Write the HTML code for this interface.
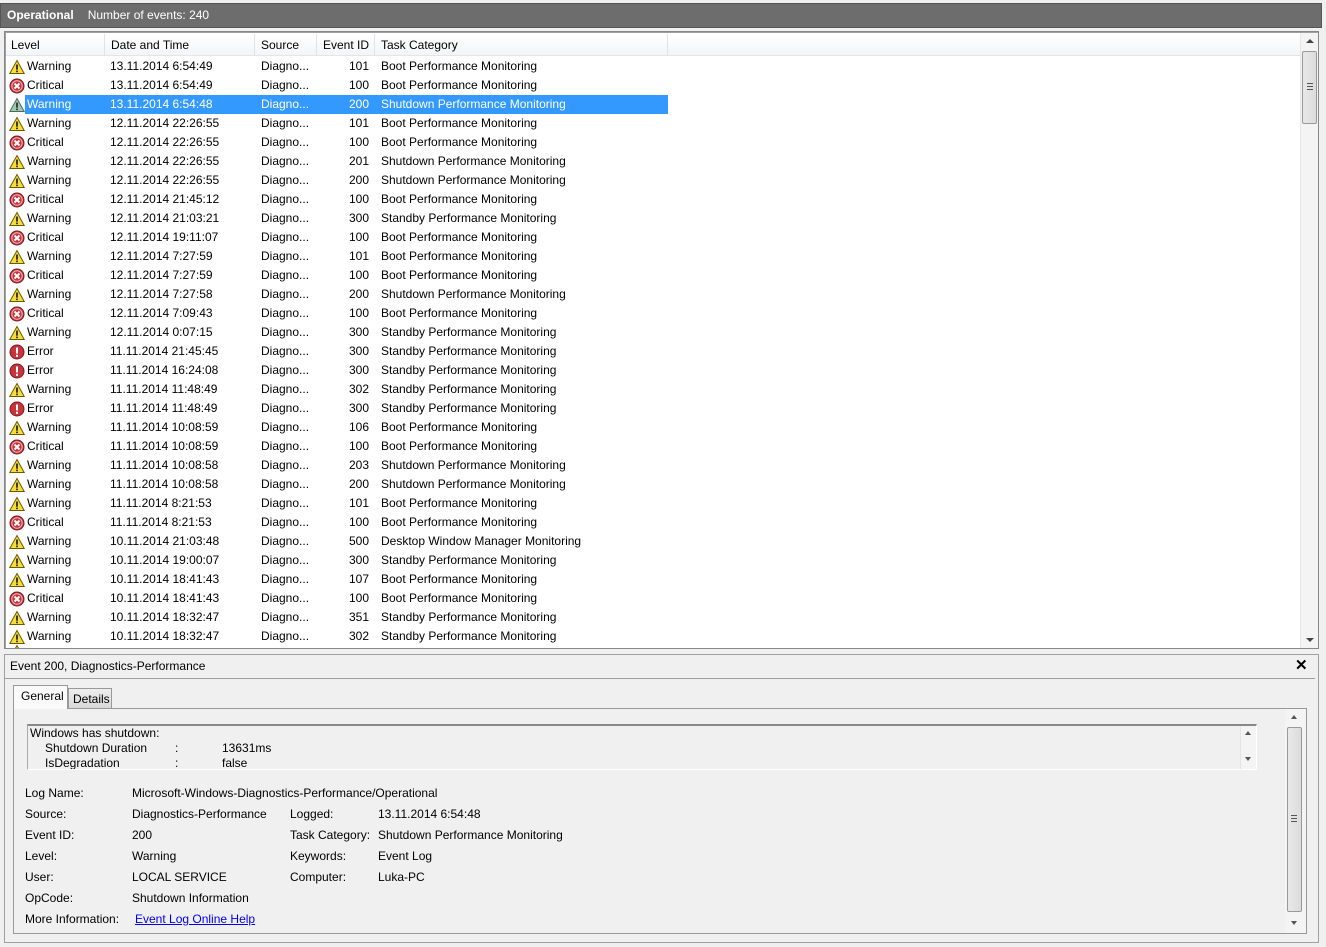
<!DOCTYPE html>
<html><head><meta charset="utf-8"><style>
*{margin:0;padding:0;box-sizing:border-box}
body{width:1326px;height:947px;background:#f0f0f0;font-family:"Liberation Sans",sans-serif;font-size:12px;color:#000;position:relative;overflow:hidden}
.abs{position:absolute}
#title{left:0;top:3px;width:1322px;height:25px;background:#6d6d6d;border:1px solid #555;color:#fff;line-height:23px}
#list{left:4px;top:31px;width:1315px;height:618px;background:#fff;border:1px solid #888;box-shadow:inset 1px 1px 0 #a0a0a0}
.hd{position:absolute;top:2px;height:22px;line-height:22px;background:linear-gradient(#fff,#f4f5f7);border-right:1px solid #e2e3e5;border-bottom:1px solid #e5e5e5}
.r{position:absolute;left:0;height:19px;line-height:19px;width:663px;white-space:nowrap}
.r span{position:absolute}
.r .i{position:absolute;left:4px;top:2px;width:16px;height:16px}
.l{left:22px}.d{left:105px}.s{left:256px}.e{left:312px;width:52px;text-align:right}.t{left:376px}
.sel{background:#3399ff;color:#fff}
.sb{position:absolute;background:#f4f4f4;border-left:1px solid #e6e6e6}
.thumb{position:absolute;background:linear-gradient(90deg,#e8e8e8,#dcdcdc);border:1px solid #999;border-radius:2px}
a{color:#0000ee;text-decoration:underline}
</style></head><body>
<svg width="0" height="0" style="position:absolute">
<defs>
<g id="w"><path d="M8 1.5 L15.2 14.5 H0.8 Z" fill="#f7dd3a" stroke="#6b5a00" stroke-width="1"/><rect x="7.2" y="5.5" width="1.6" height="5.2" fill="#111"/><rect x="7.2" y="11.6" width="1.6" height="1.6" fill="#111"/></g>
<g id="ws"><path d="M8 1.5 L15.2 14.5 H0.8 Z" fill="#9ec9b0" stroke="#4f6b5b" stroke-width="1"/><rect x="7.2" y="5.5" width="1.6" height="5.2" fill="#222"/><rect x="7.2" y="11.6" width="1.6" height="1.6" fill="#222"/></g>
<g id="c"><circle cx="8" cy="8" r="7" fill="#c9333c" stroke="#7a1a20"/><circle cx="8" cy="8" r="5.2" fill="none" stroke="#f2b9bc" stroke-width="1"/><path d="M5.5 5.5 L10.5 10.5 M10.5 5.5 L5.5 10.5" stroke="#fff" stroke-width="2"/></g>
<g id="e"><circle cx="8" cy="8" r="7" fill="#c9333c" stroke="#7a1a20"/><rect x="7" y="3.5" width="2" height="6" fill="#fff"/><rect x="7" y="10.8" width="2" height="2" fill="#fff"/></g>
</defs></svg>

<div id="title" class="abs"><b style="margin-left:6px">Operational</b><span style="margin-left:14px">Number of events: 240</span></div>

<div id="list" class="abs">
<div class="hd" style="left:1px;width:99px"><span style="margin-left:5px">Level</span></div>
<div class="hd" style="left:100px;width:150px"><span style="margin-left:6px">Date and Time</span></div>
<div class="hd" style="left:250px;width:62px"><span style="margin-left:6px">Source</span></div>
<div class="hd" style="left:312px;width:58px;text-align:right;padding-right:5px">Event ID</div>
<div class="hd" style="left:370px;width:293px"><span style="margin-left:6px">Task Category</span></div>
<div class="hd" style="left:663px;width:633px;border-right:0"></div>

<div style="position:absolute;left:0;top:-6px">
<div class="r" style="top:31px"><svg class="i"><use href="#w"/></svg><span class="l">Warning</span><span class="d">13.11.2014 6:54:49</span><span class="s">Diagno...</span><span class="e">101</span><span class="t">Boot Performance Monitoring</span></div>
<div class="r" style="top:50px"><svg class="i"><use href="#c"/></svg><span class="l">Critical</span><span class="d">13.11.2014 6:54:49</span><span class="s">Diagno...</span><span class="e">100</span><span class="t">Boot Performance Monitoring</span></div>
<div class="r" style="top:69px"><svg class="i"><use href="#ws"/></svg><div class="sel" style="position:absolute;left:20px;top:0;width:643px;height:19px"></div><span class="l" style="color:#fff">Warning</span><span class="d" style="color:#fff">13.11.2014 6:54:48</span><span class="s" style="color:#fff">Diagno...</span><span class="e" style="color:#fff">200</span><span class="t" style="color:#fff">Shutdown Performance Monitoring</span></div>
<div class="r" style="top:88px"><svg class="i"><use href="#w"/></svg><span class="l">Warning</span><span class="d">12.11.2014 22:26:55</span><span class="s">Diagno...</span><span class="e">101</span><span class="t">Boot Performance Monitoring</span></div>
<div class="r" style="top:107px"><svg class="i"><use href="#c"/></svg><span class="l">Critical</span><span class="d">12.11.2014 22:26:55</span><span class="s">Diagno...</span><span class="e">100</span><span class="t">Boot Performance Monitoring</span></div>
<div class="r" style="top:126px"><svg class="i"><use href="#w"/></svg><span class="l">Warning</span><span class="d">12.11.2014 22:26:55</span><span class="s">Diagno...</span><span class="e">201</span><span class="t">Shutdown Performance Monitoring</span></div>
<div class="r" style="top:145px"><svg class="i"><use href="#w"/></svg><span class="l">Warning</span><span class="d">12.11.2014 22:26:55</span><span class="s">Diagno...</span><span class="e">200</span><span class="t">Shutdown Performance Monitoring</span></div>
<div class="r" style="top:164px"><svg class="i"><use href="#c"/></svg><span class="l">Critical</span><span class="d">12.11.2014 21:45:12</span><span class="s">Diagno...</span><span class="e">100</span><span class="t">Boot Performance Monitoring</span></div>
<div class="r" style="top:183px"><svg class="i"><use href="#w"/></svg><span class="l">Warning</span><span class="d">12.11.2014 21:03:21</span><span class="s">Diagno...</span><span class="e">300</span><span class="t">Standby Performance Monitoring</span></div>
<div class="r" style="top:202px"><svg class="i"><use href="#c"/></svg><span class="l">Critical</span><span class="d">12.11.2014 19:11:07</span><span class="s">Diagno...</span><span class="e">100</span><span class="t">Boot Performance Monitoring</span></div>
<div class="r" style="top:221px"><svg class="i"><use href="#w"/></svg><span class="l">Warning</span><span class="d">12.11.2014 7:27:59</span><span class="s">Diagno...</span><span class="e">101</span><span class="t">Boot Performance Monitoring</span></div>
<div class="r" style="top:240px"><svg class="i"><use href="#c"/></svg><span class="l">Critical</span><span class="d">12.11.2014 7:27:59</span><span class="s">Diagno...</span><span class="e">100</span><span class="t">Boot Performance Monitoring</span></div>
<div class="r" style="top:259px"><svg class="i"><use href="#w"/></svg><span class="l">Warning</span><span class="d">12.11.2014 7:27:58</span><span class="s">Diagno...</span><span class="e">200</span><span class="t">Shutdown Performance Monitoring</span></div>
<div class="r" style="top:278px"><svg class="i"><use href="#c"/></svg><span class="l">Critical</span><span class="d">12.11.2014 7:09:43</span><span class="s">Diagno...</span><span class="e">100</span><span class="t">Boot Performance Monitoring</span></div>
<div class="r" style="top:297px"><svg class="i"><use href="#w"/></svg><span class="l">Warning</span><span class="d">12.11.2014 0:07:15</span><span class="s">Diagno...</span><span class="e">300</span><span class="t">Standby Performance Monitoring</span></div>
<div class="r" style="top:316px"><svg class="i"><use href="#e"/></svg><span class="l">Error</span><span class="d">11.11.2014 21:45:45</span><span class="s">Diagno...</span><span class="e">300</span><span class="t">Standby Performance Monitoring</span></div>
<div class="r" style="top:335px"><svg class="i"><use href="#e"/></svg><span class="l">Error</span><span class="d">11.11.2014 16:24:08</span><span class="s">Diagno...</span><span class="e">300</span><span class="t">Standby Performance Monitoring</span></div>
<div class="r" style="top:354px"><svg class="i"><use href="#w"/></svg><span class="l">Warning</span><span class="d">11.11.2014 11:48:49</span><span class="s">Diagno...</span><span class="e">302</span><span class="t">Standby Performance Monitoring</span></div>
<div class="r" style="top:373px"><svg class="i"><use href="#e"/></svg><span class="l">Error</span><span class="d">11.11.2014 11:48:49</span><span class="s">Diagno...</span><span class="e">300</span><span class="t">Standby Performance Monitoring</span></div>
<div class="r" style="top:392px"><svg class="i"><use href="#w"/></svg><span class="l">Warning</span><span class="d">11.11.2014 10:08:59</span><span class="s">Diagno...</span><span class="e">106</span><span class="t">Boot Performance Monitoring</span></div>
<div class="r" style="top:411px"><svg class="i"><use href="#c"/></svg><span class="l">Critical</span><span class="d">11.11.2014 10:08:59</span><span class="s">Diagno...</span><span class="e">100</span><span class="t">Boot Performance Monitoring</span></div>
<div class="r" style="top:430px"><svg class="i"><use href="#w"/></svg><span class="l">Warning</span><span class="d">11.11.2014 10:08:58</span><span class="s">Diagno...</span><span class="e">203</span><span class="t">Shutdown Performance Monitoring</span></div>
<div class="r" style="top:449px"><svg class="i"><use href="#w"/></svg><span class="l">Warning</span><span class="d">11.11.2014 10:08:58</span><span class="s">Diagno...</span><span class="e">200</span><span class="t">Shutdown Performance Monitoring</span></div>
<div class="r" style="top:468px"><svg class="i"><use href="#w"/></svg><span class="l">Warning</span><span class="d">11.11.2014 8:21:53</span><span class="s">Diagno...</span><span class="e">101</span><span class="t">Boot Performance Monitoring</span></div>
<div class="r" style="top:487px"><svg class="i"><use href="#c"/></svg><span class="l">Critical</span><span class="d">11.11.2014 8:21:53</span><span class="s">Diagno...</span><span class="e">100</span><span class="t">Boot Performance Monitoring</span></div>
<div class="r" style="top:506px"><svg class="i"><use href="#w"/></svg><span class="l">Warning</span><span class="d">10.11.2014 21:03:48</span><span class="s">Diagno...</span><span class="e">500</span><span class="t">Desktop Window Manager Monitoring</span></div>
<div class="r" style="top:525px"><svg class="i"><use href="#w"/></svg><span class="l">Warning</span><span class="d">10.11.2014 19:00:07</span><span class="s">Diagno...</span><span class="e">300</span><span class="t">Standby Performance Monitoring</span></div>
<div class="r" style="top:544px"><svg class="i"><use href="#w"/></svg><span class="l">Warning</span><span class="d">10.11.2014 18:41:43</span><span class="s">Diagno...</span><span class="e">107</span><span class="t">Boot Performance Monitoring</span></div>
<div class="r" style="top:563px"><svg class="i"><use href="#c"/></svg><span class="l">Critical</span><span class="d">10.11.2014 18:41:43</span><span class="s">Diagno...</span><span class="e">100</span><span class="t">Boot Performance Monitoring</span></div>
<div class="r" style="top:582px"><svg class="i"><use href="#w"/></svg><span class="l">Warning</span><span class="d">10.11.2014 18:32:47</span><span class="s">Diagno...</span><span class="e">351</span><span class="t">Standby Performance Monitoring</span></div>
<div class="r" style="top:601px"><svg class="i"><use href="#w"/></svg><span class="l">Warning</span><span class="d">10.11.2014 18:32:47</span><span class="s">Diagno...</span><span class="e">302</span><span class="t">Standby Performance Monitoring</span></div>
</div>
<div style="position:absolute;left:4px;top:612px;width:16px;height:4px;overflow:hidden"><svg width="16" height="16"><use href="#w"/></svg></div>

<div class="sb" style="left:1295px;top:1px;width:18px;height:615px">
<div style="position:absolute;left:5px;top:6px;border:4px solid transparent;border-bottom:4px solid #444;border-top:0"></div>
<div class="thumb" style="left:1px;top:18px;width:15px;height:73px"><div style="position:absolute;left:4px;top:31px;width:6px;height:7px;border-top:1px solid #555;border-bottom:1px solid #555"><div style="margin-top:2px;border-top:1px solid #555"></div></div></div>
<div style="position:absolute;left:5px;top:605px;border:4px solid transparent;border-top:4px solid #444;border-bottom:0"></div>
</div>
</div>

<!-- bottom panel -->
<div class="abs" style="left:4px;top:654px;width:1315px;height:289px;border:1px solid #a0a0a0;background:#f0f0f0">
<div style="position:absolute;left:5px;top:4px">Event 200, Diagnostics-Performance</div>
<div style="position:absolute;left:1290px;top:1px;font-weight:bold;font-size:15px">✕</div>
<div style="position:absolute;left:0;top:23px;width:1310px;height:1px;background:#a0a0a0"></div>
<div style="position:absolute;left:8px;top:30px;width:55px;height:24px;border:1px solid #999;border-bottom:0;background:#fafafa;padding:3px 0 0 7px;z-index:2">General</div>
<div style="position:absolute;left:63px;top:33px;width:44px;height:21px;border:1px solid #999;background:linear-gradient(#eee,#d8d8d8);padding:3px 0 0 4px">Details</div>
<div style="position:absolute;left:8px;top:53px;width:1294px;height:226px;border:1px solid #999;background:#f0f0f0">
<div style="position:absolute;left:13px;top:15px;width:1230px;height:46px;border:1px solid #aaa;border-top:2px solid #888;border-right-color:#fff;border-bottom-color:#fff;background:#f0f0f0;overflow:hidden;line-height:15px;padding-left:2px">
Windows has shutdown:<br>
<span style="padding-left:15px;display:inline-block;width:145px">Shutdown Duration</span><span style="display:inline-block;width:47px">:</span>13631ms<br>
<span style="padding-left:15px;display:inline-block;width:145px">IsDegradation</span><span style="display:inline-block;width:47px">:</span>false
<div style="position:absolute;right:0;top:0;width:16px;height:46px;background:#f4f4f4;border-left:1px solid #e4e4e4"><div style="position:absolute;left:4px;top:5px;border:3px solid transparent;border-bottom:4px solid #555;border-top:0"></div><div style="position:absolute;left:4px;top:31px;border:3px solid transparent;border-top:4px solid #555;border-bottom:0"></div></div>
</div>
<div style="position:absolute;left:11px;top:74px;line-height:21px">Log Name:<br>Source:<br>Event ID:<br>Level:<br>User:<br>OpCode:<br>More Information:</div>
<div style="position:absolute;left:118px;top:74px;line-height:21px">Microsoft-Windows-Diagnostics-Performance/Operational<br>Diagnostics-Performance<br>200<br>Warning<br>LOCAL SERVICE<br>Shutdown Information<br><a style="margin-left:3px">Event Log Online Help</a></div>
<div style="position:absolute;left:276px;top:95px;line-height:21px">Logged:<br>Task Category:<br>Keywords:<br>Computer:</div>
<div style="position:absolute;left:364px;top:95px;line-height:21px">13.11.2014 6:54:48<br>Shutdown Performance Monitoring<br>Event Log<br>Luka-PC</div>
<div style="position:absolute;left:1271px;top:0;width:21px;height:224px;background:#f4f4f4">
<div style="position:absolute;left:6px;top:6px;border:3px solid transparent;border-bottom:4px solid #555;border-top:0"></div>
<div class="thumb" style="left:2px;top:18px;width:15px;height:185px"><div style="position:absolute;left:3px;top:87px;width:6px;height:7px;border-top:1px solid #555;border-bottom:1px solid #555"><div style="margin-top:2px;border-top:1px solid #555"></div></div></div>
<div style="position:absolute;left:6px;top:212px;border:3px solid transparent;border-top:4px solid #555;border-bottom:0"></div>
</div>
</div>
</div>
</body></html>
